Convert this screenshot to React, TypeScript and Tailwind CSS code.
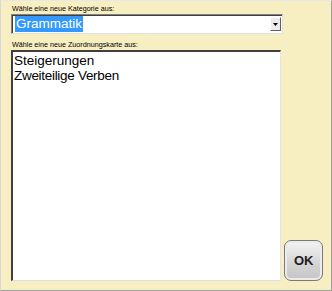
import React from "react";

export default function App() {
  return (
    <div
      className="w-[332px] h-[291px] bg-[#f7efc1] border-t border-l border-t-[#e8e8e8] border-l-[#d8d8d8] border-r border-b border-r-[#a0a0a0] border-b-[#a0a0a0] flex flex-col pl-[10px] pt-[3px] pr-[8px] pb-[9px] overflow-hidden"
      style={{ fontFamily: '"Liberation Sans", Arial, sans-serif' }}
    >
      <div className="text-[7.2px] leading-[10px] text-black pl-[1px] h-[10px]">Wähle eine neue Kategorie aus:</div>
      <div className="w-[272px] h-[20px] flex bg-white border-t border-l border-t-[#808080] border-l-[#808080] border-r border-b border-r-[#e0e0e0] border-b-[#e0e0e0] shadow-[inset_1px_1px_0_#404040]">
        <div className="flex-1 flex items-center pl-[3px]">
          <span className="bg-[#3399ff] text-white text-[13.5px] leading-[16px] px-[1px]">Grammatik</span>
        </div>
        <div className="w-[11px] my-[2px] mr-[1px] bg-[#ececec] border-r border-b border-[#606060] border-t border-l border-t-white border-l-white flex items-center justify-center">
          <svg width="5" height="3" viewBox="0 0 5 3"><path d="M0 0h5L2.5 3z" fill="#000" /></svg>
        </div>
      </div>
      <div className="text-[7.2px] leading-[10px] text-black pl-[1px] mt-[6px] h-[10px]">Wähle eine neue Zuordnungskarte aus:</div>
      <div className="flex flex-1 items-end gap-[3px]">
        <div className="w-[272px] h-full bg-white border-t-2 border-l-2 border-t-[#404040] border-l-[#404040] border-r border-b border-r-[#e4e4e4] border-b-[#dcdcec] pl-[1px] pt-[1px] text-[13.5px] leading-[15px] text-black">
          <div>Steigerungen</div>
          <div className="tracking-[-0.3px]">Zweiteilige Verben</div>
        </div>
        <button className="w-[39px] h-[41px] rounded-[7px] border border-[#7a7a7a] bg-[linear-gradient(#f4f4f4,#d8d8d8_50%,#c4c4c4)] shadow-[inset_0_0_0_2px_#ececec] flex items-center justify-center text-[13px] font-bold text-[#202020]">
          OK
        </button>
      </div>
    </div>
  );
}
